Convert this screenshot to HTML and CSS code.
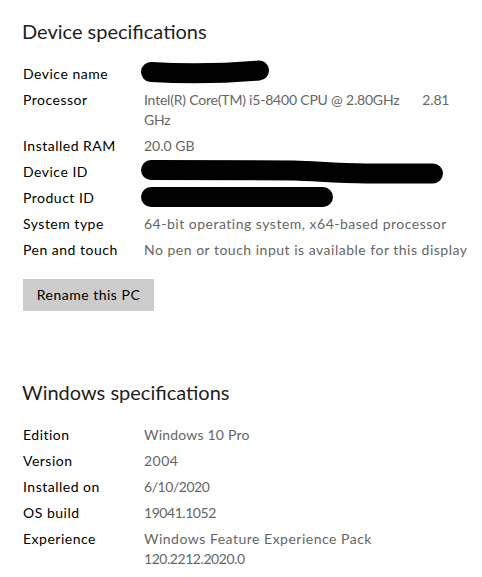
FILE: index.html
```html
<!DOCTYPE html>
<html lang="en">
<head>
<meta charset="utf-8">
<title>About</title>
<link rel="stylesheet" href="styles.css">
</head>
<body>
<main class="page">
  <section class="section">
    <h2 class="heading">Device specifications</h2>
    <dl class="specs">
      <dt>Device name</dt>
      <dd class="redacted"><svg class="mark" width="326" height="20" viewBox="0 0 326 20"><path d="M7 8 C40 10 80 9.5 115 6.5" /></svg></dd>
      <dt>Processor</dt>
      <dd class="tight">Intel(R) Core(TM) i5-8400 CPU @ 2.80GHz<span class="gap"></span>2.81<br>GHz</dd>
      <dt>Installed RAM</dt>
      <dd class="plain">20.0 GB</dd>
      <dt>Device ID</dt>
      <dd class="redacted"><svg class="mark" width="326" height="20" viewBox="0 0 326 20"><path d="M7 8 L150 8.5 C172 9 192 11.5 222 11.5 L289 11.5" /></svg></dd>
      <dt>Product ID</dt>
      <dd class="redacted"><svg class="mark" width="326" height="20" viewBox="0 0 326 20"><path d="M7 9 L179 9" /></svg></dd>
      <dt>System type</dt>
      <dd>64-bit operating system, x64-based processor</dd>
      <dt>Pen and touch</dt>
      <dd>No pen or touch input is available for this display</dd>
    </dl>
    <button class="btn" type="button">Rename this PC</button>
  </section>
  <section class="section second">
    <h2 class="heading">Windows specifications</h2>
    <dl class="specs">
      <dt>Edition</dt>
      <dd class="soft">Windows 10 Pro</dd>
      <dt>Version</dt>
      <dd>2004</dd>
      <dt>Installed on</dt>
      <dd class="num">6/10/2020</dd>
      <dt>OS build</dt>
      <dd class="num">19041.1052</dd>
      <dt>Experience</dt>
      <dd>Windows Feature Experience Pack<br><span class="num">120.2212.2020.0</span></dd>
    </dl>
  </section>
</main>
</body>
</html>
```
FILE: styles.css
```css
* { box-sizing: border-box; }

html, body {
  margin: 0;
  padding: 0;
  background: #ffffff;
}

body {
  font-family: "Segoe UI", Lato, "Liberation Sans", sans-serif;
  color: #000;
  font-size: 14px;
  line-height: 20px;
  letter-spacing: 0.5px;
}

.page {
  padding: 17px 0 0 23px;
}

.section {
  display: flex;
  flex-direction: column;
  align-items: flex-start;
}

.second {
  margin-top: 67px;
}

.heading {
  margin: 0 0 19px -1px;
  font-size: 20px;
  line-height: 28px;
  font-weight: 400;
  letter-spacing: 0;
  color: #1e1e1e;
}

.specs {
  margin: 0;
  display: grid;
  grid-template-columns: 121px 326px;
  row-gap: 6px;
}

.specs dt {
  margin: 0;
  color: #000;
}

.specs dd {
  margin: 0;
  color: #666;
  white-space: nowrap;
}

.specs .tight {
  letter-spacing: -0.2px;
}

.specs .plain {
  letter-spacing: 0;
}

.specs .soft {
  letter-spacing: 0.2px;
}

.num {
  letter-spacing: -0.45px;
}

.gap {
  display: inline-block;
  width: 23px;
}

.redacted {
  height: 20px;
}

.mark {
  display: block;
  overflow: visible;
}

.mark path {
  fill: none;
  stroke: #000;
  stroke-width: 20;
  stroke-linecap: round;
  stroke-linejoin: round;
}

.btn {
  margin-top: 19px;
  width: 131px;
  height: 32px;
  padding: 0;
  border: 0;
  border-radius: 0;
  background: #cccccc;
  color: #000;
  font-family: inherit;
  font-size: 14px;
  line-height: 32px;
  letter-spacing: 0.5px;
  text-align: center;
}
```
